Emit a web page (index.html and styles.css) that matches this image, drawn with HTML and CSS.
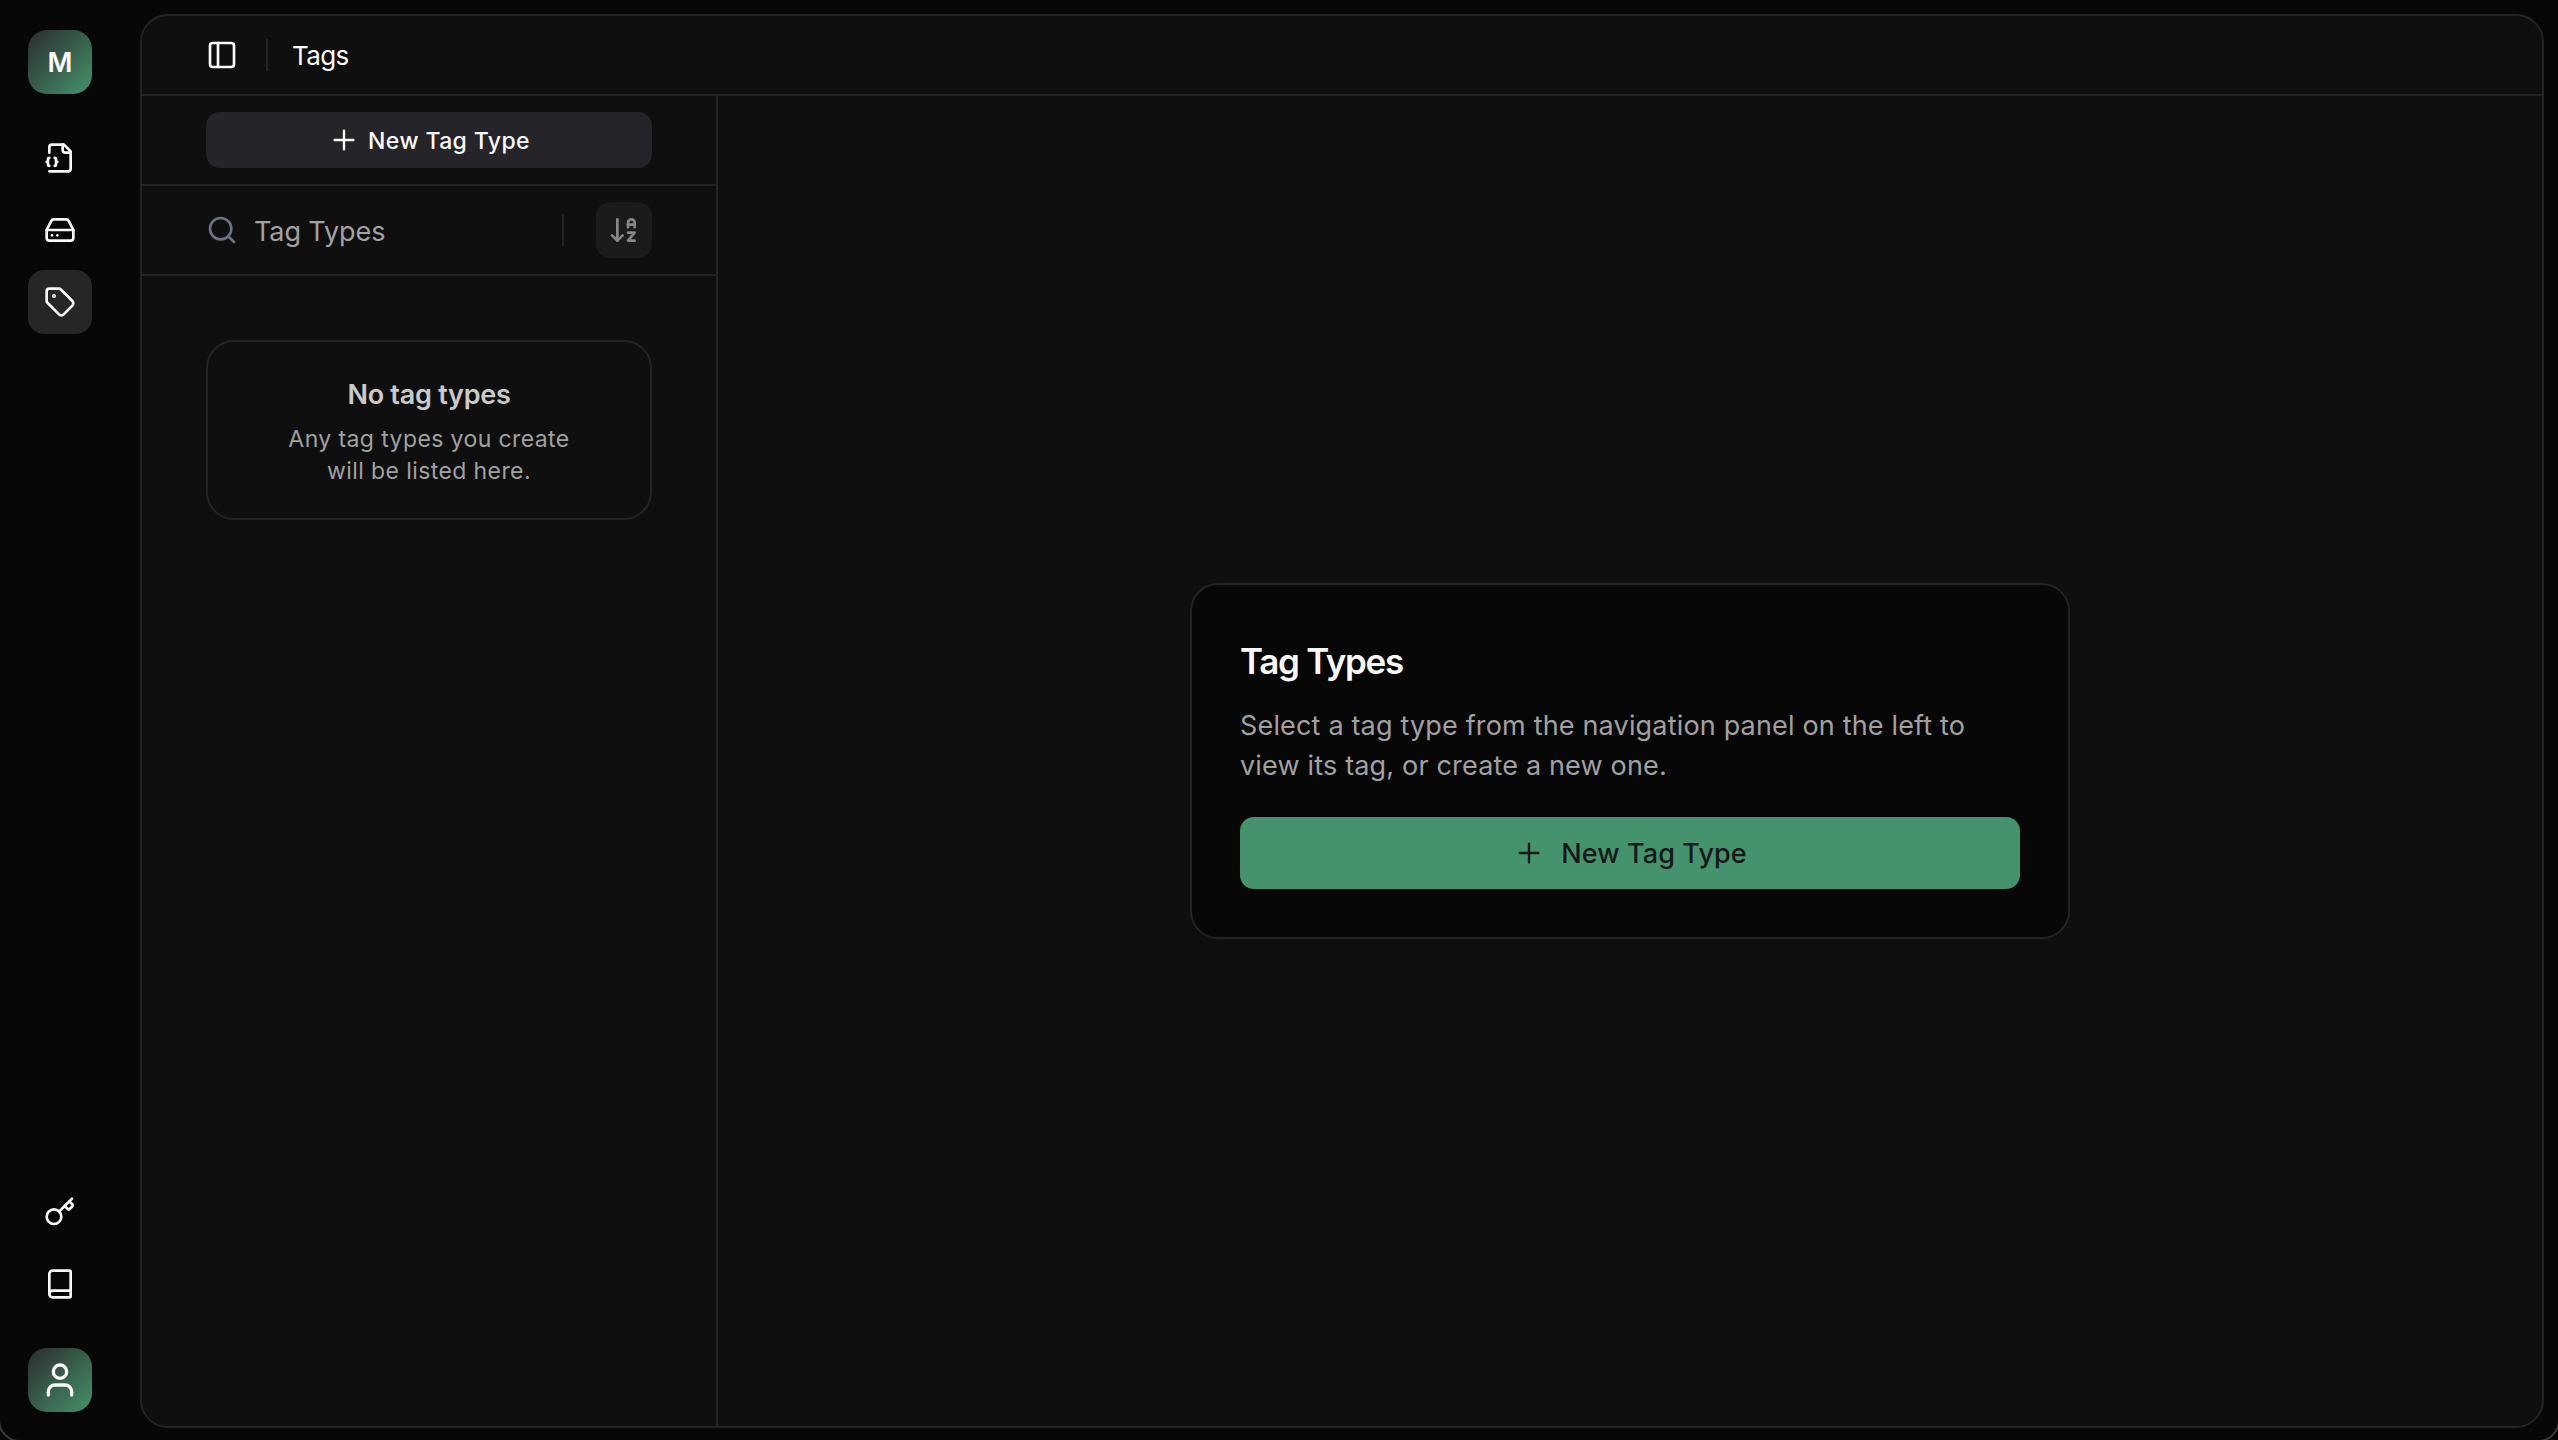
FILE: index.html
```html
<!DOCTYPE html>
<html lang="en">
<head>
<meta charset="utf-8">
<title>Tags</title>
<link rel="stylesheet" href="styles.css">
</head>
<body>
<div class="window">
  <nav class="rail">
    <div class="badge">M</div>
    <div class="rail-group rail-main">
      <a class="rail-item"><svg class="icon" viewBox="0 0 24 24"><path d="M4 22h14a2 2 0 0 0 2-2V7l-5-5H6a2 2 0 0 0-2 2v4"/><path d="M14 2v4a2 2 0 0 0 2 2h4"/><path d="M5 14a1 1 0 0 0-1 1v1a1 1 0 0 1-1 1 1 1 0 0 1 1 1v1a1 1 0 0 0 1 1" transform="translate(-1 -2.100)"/><path d="M9 20a1 1 0 0 0 1-1v-1a1 1 0 0 1 1-1 1 1 0 0 1-1-1v-1a1 1 0 0 0-1-1" transform="translate(-1 -2.100)"/></svg></a>
      <a class="rail-item"><svg class="icon" viewBox="0 0 24 24"><path d="M22 12H2"/><path d="M5.450 5.110 2 12v6a2 2 0 0 0 2 2h16a2 2 0 0 0 2-2v-6l-3.450-6.890A2 2 0 0 0 16.760 4H7.240a2 2 0 0 0-1.790 1.110z"/><path d="M6 16h.01M10 16h.01"/></svg></a>
      <a class="rail-item active"><svg class="icon" viewBox="0 0 24 24"><path d="M12.586 2.586A2 2 0 0 0 11.172 2H4a2 2 0 0 0-2 2v7.172a2 2 0 0 0 .586 1.414l8.704 8.704a2.426 2.426 0 0 0 3.420 0l6.580-6.580a2.426 2.426 0 0 0 0-3.420z"/><circle cx="7.500" cy="7.500" r=".5" fill="currentColor"/></svg></a>
    </div>
    <div class="rail-group rail-foot">
      <a class="rail-item"><svg class="icon" viewBox="0 0 24 24"><path d="m15.500 7.500 2.300 2.300a1 1 0 0 0 1.400 0l2.100-2.100a1 1 0 0 0 0-1.400L19 4"/><path d="m21 2-9.600 9.600"/><circle cx="7.500" cy="15.500" r="5.500"/></svg></a>
      <a class="rail-item"><svg class="icon" viewBox="0 0 24 24"><path d="M4 19.500v-15A2.500 2.500 0 0 1 6.500 2H19a1 1 0 0 1 1 1v18a1 1 0 0 1-1 1H6.500a1 1 0 0 1 0-5H20"/></svg></a>
    </div>
    <div class="badge"><svg class="icon user" viewBox="0 0 24 24"><path d="M19 21v-2a4 4 0 0 0-4-4H9a4 4 0 0 0-4 4v2"/><circle cx="12" cy="7" r="4"/></svg></div>
  </nav>
  <main class="panel">
    <header class="topbar">
      <svg class="icon" viewBox="0 0 24 24"><rect x="3" y="3" width="18" height="18" rx="2"/><path d="M9 3v18"/></svg>
      <span class="divider"></span>
      <span class="crumb">Tags</span>
    </header>
    <div class="content">
      <aside class="list">
        <div class="row"><button class="btn-dark"><svg class="icon plus" viewBox="0 0 24 24"><path d="M5 12h14M12 5v14"/></svg><span>New Tag Type</span></button></div>
        <div class="row">
          <svg class="icon search" viewBox="0 0 24 24"><circle cx="11" cy="11" r="8"/><path d="m21 21-4.300-4.300"/></svg>
          <span class="placeholder">Tag Types</span>
          <span class="divider"></span>
          <button class="sort"><svg class="icon" viewBox="0 0 24 24"><path d="m3 16 4 4 4-4"/><path d="M7 20V4"/><path d="M20 8h-5"/><path d="M15 10V6.500a2.500 2.500 0 0 1 5 0V10"/><path d="M15 14h5l-5 6h5"/></svg></button>
        </div>
        <section class="empty">
          <h3>No tag types</h3>
          <p>Any tag types you create<br>will be listed here.</p>
        </section>
      </aside>
      <div class="stage">
        <section class="card">
          <h2>Tag Types</h2>
          <p>Select a tag type from the navigation panel on the left to<br>view its tag, or create a new one.</p>
          <button class="btn-green"><svg class="icon plus" viewBox="0 0 24 24"><path d="M5 12h14M12 5v14"/></svg><span>New Tag Type</span></button>
        </section>
      </div>
    </div>
  </main>
</div>
</body>
</html>
```
FILE: styles.css
```css
* { box-sizing: border-box; margin: 0; padding: 0; }
:root {
  --bg: #070707;
  --panel: #0f0f0f;
  --line: #242428;
  --text: #fafafa;
  --muted: #a1a1a1;
  --green: #44936c;
}
body {
  background: #000;
  color: var(--text);
  font-family: Inter, "Liberation Sans", sans-serif;
}
button { border: 0; font: inherit; letter-spacing: inherit; }
.window {
  position: relative;
  overflow: hidden;
  display: flex;
  width: 2558px;
  height: 1440px;
  padding: 14px 14px 12px 0;
  background: var(--bg);
}
/* rounded outline of the window, visible only at the bottom corners */
.window::after {
  content: "";
  position: absolute;
  inset: -30px -2px -2px -2px;
  border: 2px solid #3c3c3c;
  border-radius: 22px;
  box-shadow: 0 0 0 20px #050707;
  pointer-events: none;
}
.icon {
  display: block;
  width: 32px;
  height: 32px;
  flex: none;
  fill: none;
  stroke: currentColor;
  stroke-width: 2;
  stroke-linecap: round;
  stroke-linejoin: round;
}
.plus { stroke-width: 1.8; }
.rail {
  display: flex;
  flex-direction: column;
  align-items: center;
  width: 140px;
  padding: 16px 20px 16px 0;
}
.badge {
  display: flex;
  align-items: center;
  justify-content: center;
  width: 64px;
  height: 64px;
  border-radius: 19px;
  background: linear-gradient(135deg, #2b2b2c, var(--green));
  font-size: 27px;
  font-weight: 600;
}
.user { width: 40px; height: 40px; }
.rail-group { display: flex; flex-direction: column; gap: 8px; }
.rail-main { margin-top: 32px; }
.rail-foot { margin-top: auto; margin-bottom: 32px; }
.rail-item {
  display: flex;
  align-items: center;
  justify-content: center;
  width: 64px;
  height: 64px;
  border-radius: 16px;
}
.rail-item.active { background: #262628; }
.panel {
  flex: 1;
  display: flex;
  flex-direction: column;
  border: 2px solid var(--line);
  border-radius: 28px;
  background: var(--panel);
}
.topbar {
  display: flex;
  align-items: center;
  height: 80px;
  padding-left: 64px;
  border-bottom: 2px solid var(--line);
}
.divider { width: 2px; height: 32px; background: var(--line); }
.topbar .divider { margin: 0 24px 0 28px; }
.crumb { font-size: 26px; letter-spacing: -0.6px; }
.content { flex: 1; display: flex; }
.list {
  flex: none;
  width: 576px;
  border-right: 2px solid var(--line);
}
.row {
  display: flex;
  align-items: center;
  height: 90px;
  padding: 0 64px;
  border-bottom: 2px solid var(--line);
}
.btn-dark {
  display: flex;
  flex: 1;
  align-items: center;
  justify-content: center;
  gap: 8px;
  height: 56px;
  border-radius: 14px;
  background: #252529;
  color: var(--text);
  font-size: 23px;
  font-weight: 500;
  letter-spacing: 0.4px;
}
.btn-dark span { padding-top: 2px; }
.search { color: #6b7280; }
.placeholder {
  flex: 1;
  margin-left: 16px;
  padding-top: 2px;
  color: var(--muted);
  font-size: 27px;
  letter-spacing: -0.1px;
}
.sort {
  display: flex;
  align-items: center;
  justify-content: center;
  width: 56px;
  height: 56px;
  margin-left: 32px;
  border-radius: 14px;
  background: #1b1b1d;
  color: #878787;
}
.empty {
  height: 180px;
  margin: 64px 64px 0;
  padding-top: 35px;
  border: 2px solid var(--line);
  border-radius: 28px;
  text-align: center;
}
.empty h3 {
  color: #cacaca;
  font-size: 27px;
  font-weight: 600;
  letter-spacing: -0.25px;
  line-height: 36px;
}
.empty p {
  margin-top: 10px;
  color: var(--muted);
  font-size: 23px;
  letter-spacing: 0.4px;
  line-height: 32px;
}
.stage {
  flex: 1;
  display: flex;
  align-items: center;
  justify-content: center;
}
.card {
  width: 880px;
  height: 356px;
  padding: 56px 48px 48px;
  border: 2px solid var(--line);
  border-radius: 28px;
  background: var(--bg);
}
.card h2 {
  font-size: 35px;
  font-weight: 600;
  letter-spacing: -1.3px;
  line-height: 40px;
}
.card p {
  margin-top: 25px;
  color: var(--muted);
  font-size: 27px;
  letter-spacing: 0.17px;
  line-height: 40px;
  white-space: nowrap;
}
.btn-green {
  display: flex;
  align-items: center;
  justify-content: center;
  gap: 16px;
  width: 100%;
  height: 72px;
  margin-top: 31px;
  border-radius: 14px;
  background: var(--green);
  color: #18181b;
  font-size: 27px;
  font-weight: 500;
  letter-spacing: 0.1px;
}
```
